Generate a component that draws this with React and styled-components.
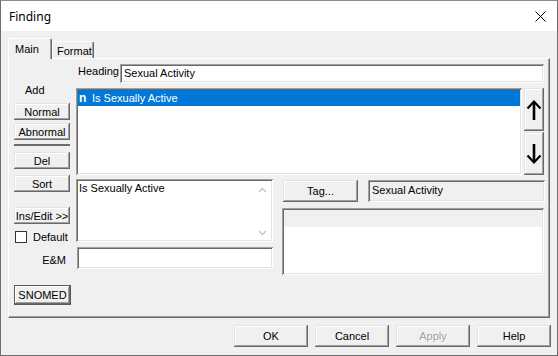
import React from 'react';
import styled, { createGlobalStyle, css } from 'styled-components';

const Global = createGlobalStyle`
  html, body { margin: 0; padding: 0; background: #fff; }
  body {
    font-family: "Liberation Sans", Arial, sans-serif;
    font-size: 11px;
    color: #000;
  }
  * { box-sizing: border-box; }
`;

const raised = css`
  background: #f0f0f0;
  box-shadow: inset -1px -1px #696969, inset 1px 1px #e3e3e3,
    inset -2px -2px #a0a0a0, inset 2px 2px #fff;
`;

const sunken = css`
  box-shadow: inset 1px 1px #a0a0a0, inset -1px -1px #fff,
    inset 2px 2px #696969, inset -2px -2px #e3e3e3;
`;

const Window = styled.div`
  width: 558px;
  height: 356px;
  border: 1px solid #6e6e6e;
  border-top-color: #8c8c8c;
  background: #f0f0f0;
  display: flex;
  flex-direction: column;
`;

const TitleBar = styled.div`
  height: 30px;
  flex: none;
  background: #fff;
  display: flex;
  align-items: center;
  justify-content: space-between;
  padding: 0 11px 0 8px;
  font-family: "Noto Sans", "Liberation Sans", sans-serif;
  font-size: 12px;
`;

const Body = styled.div`
  flex: 1;
  padding: 7px 7px 0 7px;
  display: flex;
  flex-direction: column;
`;

const TabRow = styled.div`
  display: flex;
  align-items: flex-end;
  height: 21px;
  margin-bottom: -1px;
  position: relative;
  z-index: 1;
`;

const Tab = styled.div`
  width: ${p => p.$w}px;
  height: ${p => (p.$active ? 21 : 17)}px;
  margin-bottom: ${p => (p.$active ? 0 : 1)}px;
  padding: ${p => (p.$active ? 4 : 3)}px 0 0 ${p => p.$pl}px;
  line-height: 13px;
  background: #f0f0f0;
  border-top: 1px solid #fff;
  border-left: 1px solid #fff;
  border-right: 1px solid #696969;
  box-shadow: inset -1px 0 #a0a0a0;
  border-radius: 2px 2px 0 0;
`;

const Panel = styled.div`
  height: 260px;
  border-top: 1px solid #fff;
  border-left: 1px solid #fff;
  border-right: 1px solid #696969;
  border-bottom: 1px solid #696969;
  box-shadow: inset -1px -1px #a0a0a0;
  padding: 5px 4px 0 5px;
  display: flex;
  gap: 5px;
`;

const LeftCol = styled.div`
  width: 57px;
  flex: none;
  display: flex;
  flex-direction: column;
`;

const Label = styled.div`
  margin-top: ${p => p.$mt || 0}px;
  padding-left: ${p => p.$pl || 0}px;
  padding-right: ${p => p.$pr || 0}px;
  text-align: ${p => p.$align || 'left'};
  line-height: 13px;
  height: 13px;
  white-space: nowrap;
`;

const Button = styled.div`
  ${raised};
  width: ${p => p.$w || 56}px;
  height: ${p => p.$h || 17}px;
  margin-top: ${p => p.$mt || 0}px;
  margin-left: ${p => p.$ml || 0}px;
  display: flex;
  align-items: center;
  justify-content: center;
  flex: none;
  white-space: nowrap;
  color: ${p => (p.$disabled ? '#a0a0a0' : '#000')};
  text-shadow: ${p => (p.$disabled ? '1px 1px #fff' : 'none')};
`;

const DefaultButton = styled(Button)`
  border: 1px solid #5a5a5a;
  box-shadow: inset -1px -1px #696969, inset 1px 1px #fff, inset -2px -2px #a0a0a0;
`;

const Separator = styled.div`
  margin: 4px 0 1px;
  width: 56px;
  height: 2px;
  background: #6d6d6d;
`;

const CheckRow = styled.div`
  display: flex;
  align-items: center;
  margin-top: 6px;
  height: 13px;
`;

const CheckBox = styled.div`
  width: 12px;
  height: 12px;
  margin-left: 1px;
  background: #fff;
  border: 1px solid #333;
`;

const CheckLabel = styled.span`
  margin-left: 6px;
`;

const RightCol = styled.div`
  flex: 1;
  display: flex;
  flex-direction: column;
`;

const HeadingRow = styled.div`
  display: flex;
  height: 19px;
`;

const HeadingLabel = styled.div`
  width: 44px;
  padding-left: 2px;
  line-height: 13px;
  padding-top: 1px;
`;

const Field = styled.div`
  ${sunken};
  background: ${p => (p.$gray ? '#f0f0f0' : '#fff')};
  flex: ${p => (p.$flex ? 1 : 'none')};
  width: ${p => (p.$w ? `${p.$w}px` : 'auto')};
  height: ${p => p.$h}px;
  margin-top: ${p => p.$mt || 0}px;
  margin-left: ${p => p.$ml || 0}px;
  margin-right: ${p => p.$mr || 0}px;
  padding: ${p => p.$pad || '3px 4px'};
  line-height: 13px;
  white-space: nowrap;
  overflow: hidden;
`;

const ListRow = styled.div`
  display: flex;
  margin-top: 5px;
  height: 87px;
`;

const ListBox = styled.div`
  ${sunken};
  flex: 1;
  background: #fff;
  padding: 2px;
`;

const ListItem = styled.div`
  height: 16px;
  display: flex;
  align-items: center;
  padding-left: 1px;
  background: ${p => (p.$selected ? '#0078d7' : 'transparent')};
  color: ${p => (p.$selected ? '#fff' : '#000')};
`;

const ItemIcon = styled.span`
  font-weight: bold;
  font-size: 12px;
  width: 13px;
`;

const ArrowCol = styled.div`
  width: 20px;
  margin: 0 1px 0 2px;
  display: flex;
  flex-direction: column;
  gap: 1px;
`;

const ArrowButton = styled(Button)`
  width: 20px;
  height: 43px;
`;

const LowerRow = styled.div`
  display: flex;
  margin-top: 4px;
`;

const LowerLeft = styled.div`
  width: 197px;
  display: flex;
  flex-direction: column;
`;

const TextArea = styled.div`
  ${sunken};
  background: #fff;
  height: 63px;
  display: flex;
`;

const TextAreaText = styled.div`
  flex: 1;
  padding: 3px 3px;
  line-height: 13px;
`;

const ScrollBar = styled.div`
  width: 17px;
  margin: 2px 2px 2px 0;
  display: flex;
  flex-direction: column;
  justify-content: space-between;
  align-items: center;
  padding: 6px 0 4px;
`;

const LowerRight = styled.div`
  flex: 1;
  margin-left: 9px;
  display: flex;
  flex-direction: column;
`;

const TagRow = styled.div`
  display: flex;
  margin-top: 1px;
`;

const GridBox = styled.div`
  ${sunken};
  margin-top: 6px;
  margin-right: 1px;
  height: 67px;
  background: #fff;
  padding: 2px;
`;

const GridHeader = styled.div`
  height: 17px;
  background: #f0f0f0;
`;

const Footer = styled.div`
  display: flex;
  justify-content: flex-end;
  gap: 7px;
  margin-top: 7px;
  margin-right: -1px;
`;

const UpArrow = () => (
  <svg width="16" height="22" viewBox="0 0 16 22">
    <path d="M8 3 V21" stroke="#000" strokeWidth="2.6" fill="none" />
    <path d="M1.5 9.5 L8 2.5 L14.5 9.5" stroke="#000" strokeWidth="2.2" fill="none" />
  </svg>
);

const DownArrow = () => (
  <svg width="16" height="22" viewBox="0 0 16 22">
    <path d="M8 1 V19" stroke="#000" strokeWidth="2.6" fill="none" />
    <path d="M1.5 12.5 L8 19.5 L14.5 12.5" stroke="#000" strokeWidth="2.2" fill="none" />
  </svg>
);

const Chevron = ({ up }) => (
  <svg width="9" height="6" viewBox="0 0 9 6">
    <path d={up ? 'M1 5 L4.5 1.5 L8 5' : 'M1 1 L4.5 4.5 L8 1'} stroke="#c4c4c4" strokeWidth="1.4" fill="none" />
  </svg>
);

const CloseIcon = () => (
  <svg width="11" height="11" viewBox="0 0 11 11">
    <path d="M0.5 0.5 L10.5 10.5 M10.5 0.5 L0.5 10.5" stroke="#000" strokeWidth="1" />
  </svg>
);

export default function App() {
  return (
    <>
      <Global />
      <Window>
        <TitleBar>
          <span>Finding</span>
          <CloseIcon />
        </TitleBar>
        <Body>
          <TabRow>
            <Tab $active $w={44} $pl={6}>Main</Tab>
            <Tab $w={42} $pl={4}>Format</Tab>
          </TabRow>
          <Panel>
            <LeftCol>
              <Label $mt={20} $pl={11}>Add</Label>
              <Button $mt={6}>Normal</Button>
              <Button $mt={3}>Abnormal</Button>
              <Separator />
              <Button $mt={5}>Del</Button>
              <Button $mt={6}>Sort</Button>
              <Button $mt={15}>Ins/Edit &gt;&gt;</Button>
              <CheckRow>
                <CheckBox />
                <CheckLabel>Default</CheckLabel>
              </CheckRow>
              <Label $mt={11} $align="right" $pr={5}>E&amp;M</Label>
              <DefaultButton $mt={18} $w={57} $h={20}>SNOMED</DefaultButton>
            </LeftCol>
            <RightCol>
              <HeadingRow>
                <HeadingLabel>Heading</HeadingLabel>
                <Field $flex $h={19} $mr={1} $pad="3px 4px">Sexual Activity</Field>
              </HeadingRow>
              <ListRow>
                <ListBox>
                  <ListItem $selected>
                    <ItemIcon>n</ItemIcon>
                    <span>Is Sexually Active</span>
                  </ListItem>
                </ListBox>
                <ArrowCol>
                  <ArrowButton><UpArrow /></ArrowButton>
                  <ArrowButton><DownArrow /></ArrowButton>
                </ArrowCol>
              </ListRow>
              <LowerRow>
                <LowerLeft>
                  <TextArea>
                    <TextAreaText>Is Sexually Active</TextAreaText>
                    <ScrollBar>
                      <Chevron up />
                      <Chevron />
                    </ScrollBar>
                  </TextArea>
                  <Field $h={22} $mt={5} $ml={1} />
                </LowerLeft>
                <LowerRight>
                  <TagRow>
                    <Button $w={75} $h={22} $ml={1}>Tag...</Button>
                    <Field $gray $flex $h={22} $ml={10} $pad="4px 4px">Sexual Activity</Field>
                  </TagRow>
                  <GridBox>
                    <GridHeader />
                  </GridBox>
                </LowerRight>
              </LowerRow>
            </RightCol>
          </Panel>
          <Footer>
            <Button $w={74} $h={22}>OK</Button>
            <Button $w={74} $h={22}>Cancel</Button>
            <Button $w={74} $h={22} $disabled>Apply</Button>
            <Button $w={74} $h={22}>Help</Button>
          </Footer>
        </Body>
      </Window>
    </>
  );
}
